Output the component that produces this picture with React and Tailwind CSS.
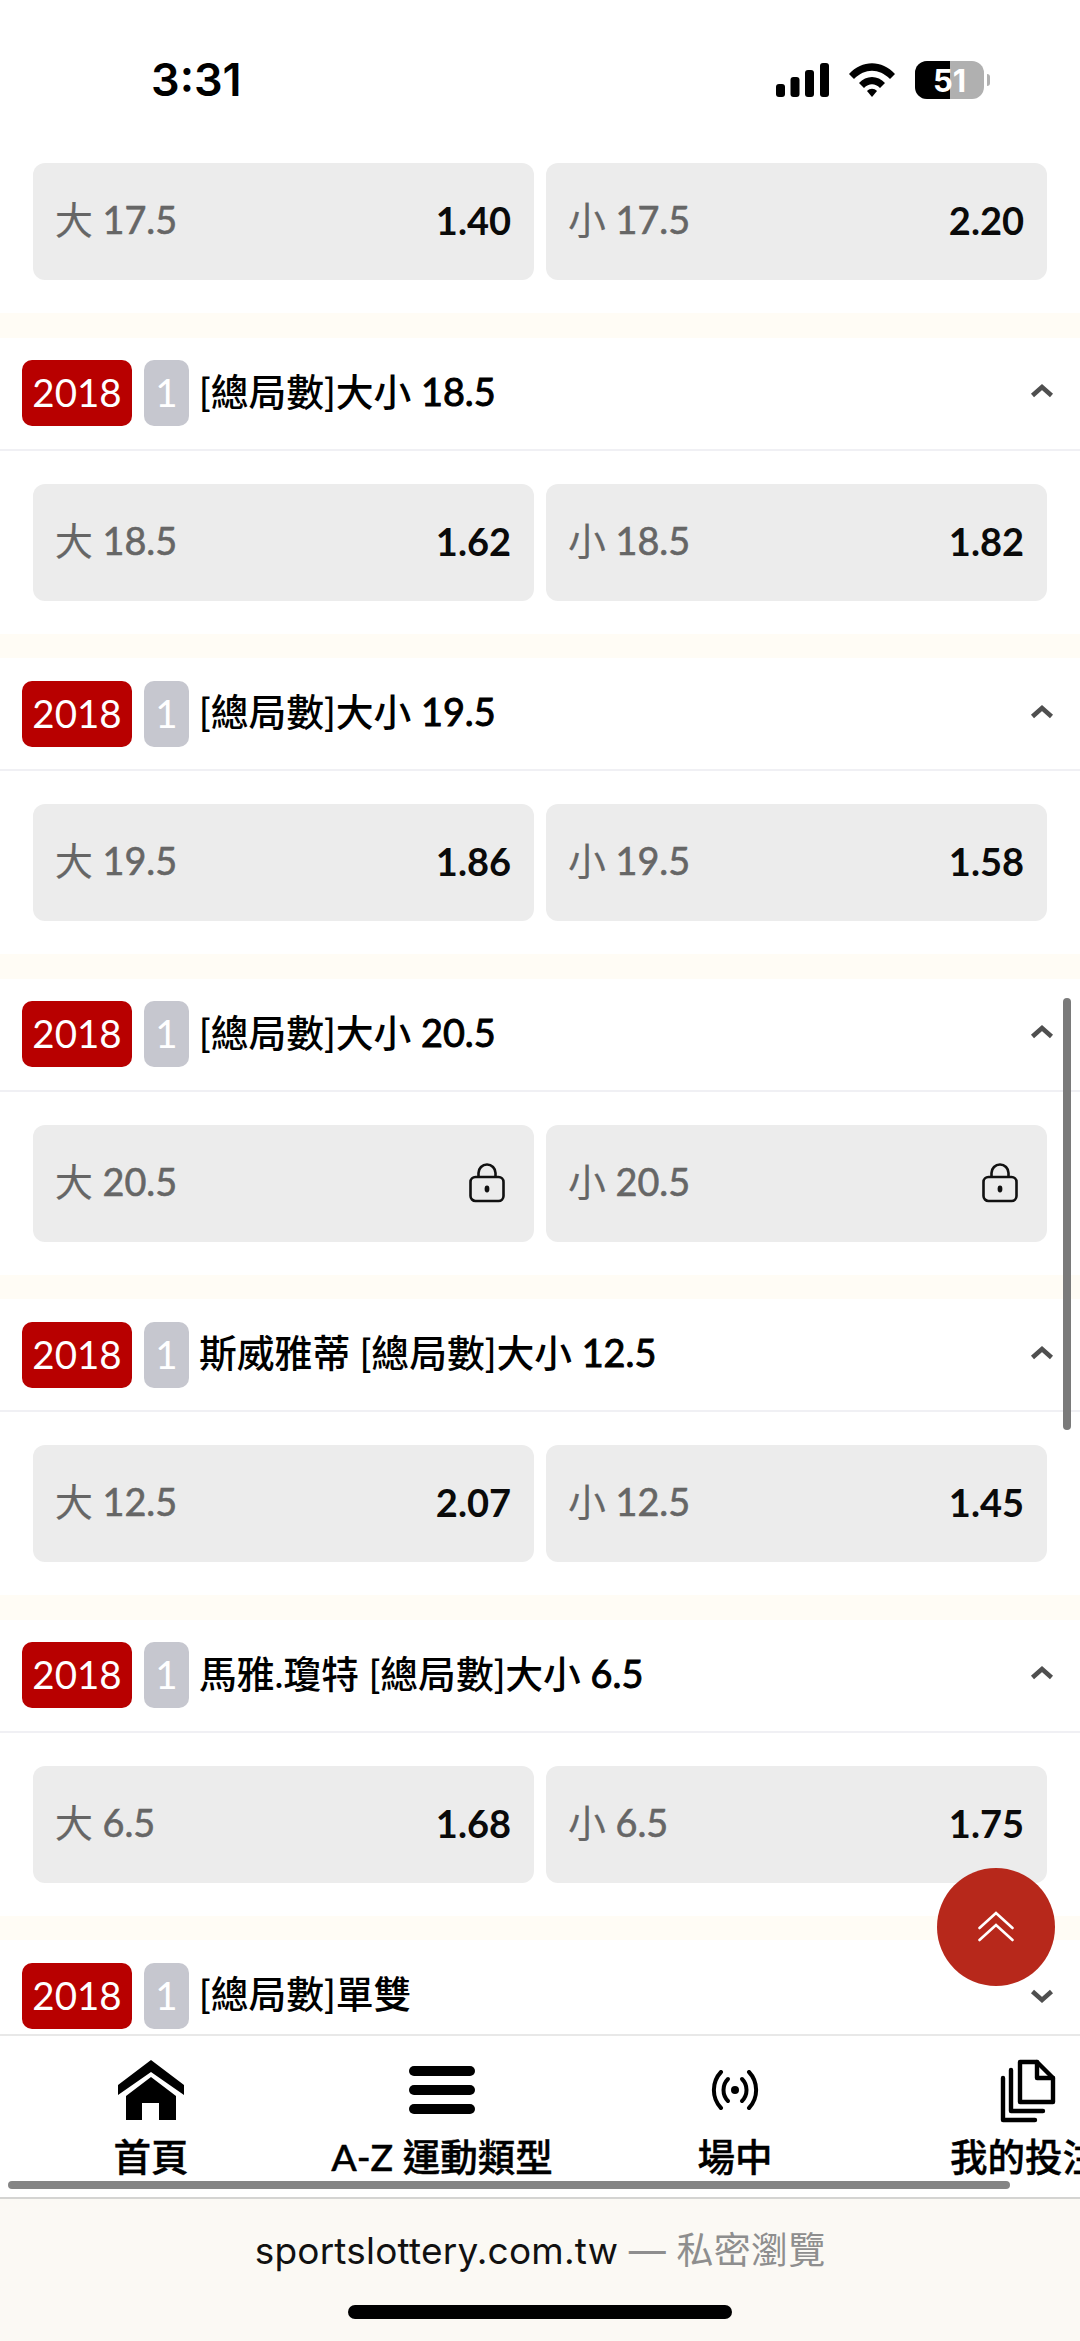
import React from "react";

const FONT = { fontFamily: '"Lato","Noto Sans CJK TC",sans-serif' };

function Chevron({ down }) {
  return (
    <svg width="24" height="16" viewBox="0 0 24 16" className={down ? "shrink-0" : "mb-[4px] shrink-0"}>
      <path d={down ? "M2.5 3.5 L12 12 L21.5 3.5" : "M2.5 12.5 L12 4 L21.5 12.5"} fill="none" stroke="#4f4f4f" strokeWidth="4.6" />
    </svg>
  );
}

function Lock() {
  return (
    <svg width="36" height="40" viewBox="0 0 36 40" className="mr-[6px] shrink-0">
      <rect x="1.5" y="14" width="33" height="24" rx="5" fill="none" stroke="#111" strokeWidth="2.6" />
      <path d="M9.5 14 V10 a8.5 8.5 0 0 1 17 0 V14" fill="none" stroke="#111" strokeWidth="2.6" />
      <ellipse cx="18" cy="26" rx="2.4" ry="3.4" fill="#111" />
    </svg>
  );
}

function Odd({ label, value }) {
  const [word, num] = label.split(" ");
  return (
    <div className="flex h-[117px] flex-1 items-center justify-between rounded-[12px] bg-[#ececec] pl-[22px] pr-[23px]">
      <span className="pb-[2px] text-[37.8px] text-[#666666]">
        <span className="[-webkit-text-stroke:0.2px_#666666]">{word} </span>
        <span className="[-webkit-text-stroke:0.6px_#666666]">{num}</span>
      </span>
      {value ? <span className="pb-[2px] text-[38px] font-bold text-[#0a0a0a]">{value}</span> : <Lock />}
    </div>
  );
}

function Odds({ a, b, va, vb }) {
  return (
    <div className="flex gap-[12px] px-[33px]">
      <Odd label={a} value={va} />
      <Odd label={b} value={vb} />
    </div>
  );
}

function Header({ title, num, down }) {
  return (
    <div className="flex h-[113px] items-center border-b-[2px] border-[#f0f0f4] bg-white pl-[22px] pr-[26px]">
      <span className="flex h-[66px] w-[110px] items-center justify-center rounded-[10px] bg-[#b80000] text-[38.5px] text-white">2018</span>
      <span className="ml-[12px] flex h-[66px] w-[45px] items-center justify-center rounded-[10px] bg-[#c6c7cf] text-[38.5px] text-white">1</span>
      <span className="ml-[10px] flex-1 pb-[2px] text-[37.8px] text-black">
        <span className="font-medium">{title}</span>
        {num ? <span className="[-webkit-text-stroke:1px_#000]"> {num}</span> : null}
      </span>
      <Chevron down={down} />
    </div>
  );
}

const sections = [
  ["[總局數]大小", "18.5", "大 18.5", "小 18.5", "1.62", "1.82"],
  ["[總局數]大小", "19.5", "大 19.5", "小 19.5", "1.86", "1.58"],
  ["[總局數]大小", "20.5", "大 20.5", "小 20.5", null, null],
  ["斯威雅蒂 [總局數]大小", "12.5", "大 12.5", "小 12.5", "2.07", "1.45"],
  ["馬雅.瓊特 [總局數]大小", "6.5", "大 6.5", "小 6.5", "1.68", "1.75"],
];

function Section({ title, num, a, b, va, vb }) {
  return (
    <section>
      <Header title={title} num={num} />
      <div className="bg-white py-[33px]">
        <Odds a={a} b={b} va={va} vb={vb} />
      </div>
      <div className="h-[24.5px] bg-[#fffcf5]" />
    </section>
  );
}

function NavItem({ w, label, children }) {
  return (
    <div className={`flex shrink-0 flex-col items-center ${w}`}>
      <div className="flex h-[66px] items-center justify-center">{children}</div>
      <span className="mt-[12px] whitespace-nowrap text-[37.5px] font-medium leading-[44px] text-black [-webkit-text-stroke:0.4px_#000]">{label}</span>
    </div>
  );
}

function StatusBar() {
  return (
    <div className="flex h-[130px] items-start justify-between bg-white pl-[151px] pr-[90px] pt-[52px]">
      <span className="text-[45px] font-semibold leading-[56px] text-black" style={{ fontFamily: 'Inter,sans-serif' }}>3:31</span>
      <div className="mt-[9px] flex items-center gap-[20px]">
        <svg width="53" height="34" viewBox="0 0 53 34">
          <rect x="0" y="21" width="9" height="13" rx="3" fill="#000" />
          <rect x="14.5" y="14" width="9" height="20" rx="3" fill="#000" />
          <rect x="29" y="7" width="9" height="27" rx="3" fill="#000" />
          <rect x="44" y="0" width="9" height="34" rx="3" fill="#000" />
        </svg>
        <svg width="46" height="34" viewBox="0 0 46 34">
          <path d="M0 11 C13 -3.5 33 -3.5 46 11 L41 16 C30 5 16 5 5 16 Z" fill="#000" />
          <path d="M10 20 C17 12 29 12 36 20 L31 25 C26 20 20 20 15 25 Z" fill="#000" />
          <path d="M18 28 C21 25 25 25 28 28 L23 34 Z" fill="#000" />
        </svg>
        <div className="flex items-center gap-[3px]">
          <div className="relative flex h-[38px] w-[69px] items-center justify-center overflow-hidden rounded-[12px] bg-[#b0b0b0]">
            <div className="absolute inset-y-0 left-0 w-[35px] bg-black" />
            <span className="relative text-[31px] font-bold leading-none text-white" style={{ fontFamily: 'Inter,sans-serif' }}>51</span>
          </div>
          <div className="h-[12px] w-[3px] rounded-r-full bg-[#b0b0b0]" />
        </div>
      </div>
    </div>
  );
}

export default function App() {
  return (
    <div className="relative flex h-[2341px] w-[1080px] flex-col overflow-hidden bg-white" style={FONT}>
      <StatusBar />
      <main className="min-h-0 flex-1 overflow-hidden">
        <div className="bg-white py-[33px]">
          <Odds a="大 17.5" b="小 17.5" va="1.40" vb="2.20" />
        </div>
        <div className="h-[24.5px] bg-[#fffcf5]" />
        {sections.map((s) => (
          <Section key={s[0] + s[1]} title={s[0]} num={s[1]} a={s[2]} b={s[3]} va={s[4]} vb={s[5]} />
        ))}
        <Header title="[總局數]單雙" down />
      </main>

      <nav className="relative h-[165px] shrink-0 overflow-hidden border-y-[2px] border-t-[#e8e8e8] border-b-[#d4d4d2] bg-white pt-[21px]">
        <div className="flex pl-[6px]">
          <NavItem w="w-[290px]" label="首頁">
            <svg width="66" height="60" viewBox="0 0 66 60">
              <path d="M33 0 L66 25 V35 L33 12 L0 35 V25 Z" fill="#000" />
              <path d="M33 17 L58 36 V60 H41 V43 H24 V60 H8 V36 Z" fill="#000" />
            </svg>
          </NavItem>
          <NavItem w="w-[292px]" label="A-Z 運動類型">
            <svg width="66" height="48" viewBox="0 0 66 48">
              <rect x="0" y="0" width="66" height="10" rx="5" fill="#000" />
              <rect x="0" y="19" width="66" height="10" rx="5" fill="#000" />
              <rect x="0" y="38" width="66" height="10" rx="5" fill="#000" />
            </svg>
          </NavItem>
          <NavItem w="w-[294px]" label="場中">
            <svg width="48" height="40" viewBox="0 0 48 40" fill="none" stroke="#000" strokeWidth="4" strokeLinecap="round">
              <path d="M10 2 C0.5 12 0.5 28 10 38" />
              <path d="M38 2 C47.5 12 47.5 28 38 38" />
              <path d="M17 9 C11 15 11 25 17 31" />
              <path d="M31 9 C37 15 37 25 31 31" />
              <circle cx="24" cy="20" r="4" fill="#000" stroke="none" />
            </svg>
          </NavItem>
          <NavItem w="w-[286px]" label="我的投注">
            <svg width="57" height="66" viewBox="0 0 57 66" fill="none" stroke="#000" strokeWidth="4.4" strokeLinejoin="round" strokeLinecap="round" className="ml-[6px]">
              <path d="M20 5 H37 L53 21 V45 H20 Z" />
              <path d="M37 5 V21 H53" />
              <path d="M11 13 V54 H43" />
              <path d="M3 21 V63 H35" />
            </svg>
          </NavItem>
        </div>
        <div className="absolute bottom-[8px] left-[8px] h-[8px] w-[1002px] rounded-full bg-[#858585]" />
      </nav>

      <footer className="flex h-[142px] shrink-0 flex-col items-center bg-[#fbf9f4]">
        <div className="mt-[30px] text-[37px] leading-[44px] tracking-[0.2px]" style={{ fontFamily: 'Inter,"Noto Sans CJK TC",sans-serif' }}>
          <span className="text-[#111]">sportslottery.com.tw</span>
          <span className="text-[#8e8e8e]"> — 私密瀏覽</span>
        </div>
        <div className="mt-[32px] h-[14px] w-[384px] rounded-full bg-black" />
      </footer>

      <div className="absolute left-[1063px] top-[998px] h-[432px] w-[8px] rounded-full bg-[#7a7a7a]" />
      <button className="absolute left-[937px] top-[1868px] flex h-[118px] w-[118px] items-center justify-center rounded-full bg-[#b7281b]">
        <svg width="36" height="32" viewBox="0 0 36 32" fill="none" stroke="#fff" strokeWidth="2.6" strokeLinecap="round">
          <path d="M1.5 17 L18 2 L34.5 17" />
          <path d="M1.5 29 L18 14 L34.5 29" />
        </svg>
      </button>
    </div>
  );
}
